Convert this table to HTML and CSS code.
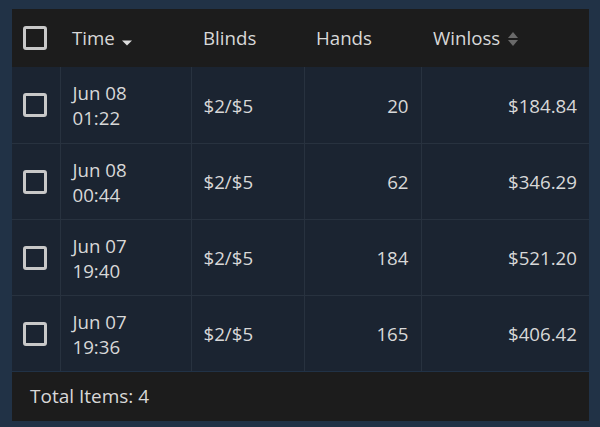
FILE: index.html
```html
<!DOCTYPE html>
<html>
<head>
<meta charset="utf-8">
<link rel="stylesheet" href="styles.css">
</head>
<body>
<div class="wrap">
  <table class="grid">
    <colgroup>
      <col class="c-check"><col class="c-time"><col class="c-blinds"><col class="c-hands"><col class="c-win">
    </colgroup>
    <thead>
      <tr>
        <th class="check"><span class="box"></span></th>
        <th>Time <svg class="caret" width="12" height="8" viewBox="0 0 12 8"><path d="M1 1.5h10L6 6.5z" fill="#dcdcdc"/></svg></th>
        <th>Blinds</th>
        <th>Hands</th>
        <th>Winloss <svg class="sort" width="12" height="16" viewBox="0 0 12 16"><path d="M6 1L11 7H1z" fill="#6a6a6a"/><path d="M1 9h10L6 15z" fill="#6a6a6a"/></svg></th>
      </tr>
    </thead>
    <tbody>
      <tr><td class="check"><span class="box"></span></td><td>Jun 08<br>01:22</td><td>$2/$5</td><td class="num">20</td><td class="num">$184.84</td></tr>
      <tr><td class="check"><span class="box"></span></td><td>Jun 08<br>00:44</td><td>$2/$5</td><td class="num">62</td><td class="num">$346.29</td></tr>
      <tr><td class="check"><span class="box"></span></td><td>Jun 07<br>19:40</td><td>$2/$5</td><td class="num">184</td><td class="num">$521.20</td></tr>
      <tr><td class="check"><span class="box"></span></td><td>Jun 07<br>19:36</td><td>$2/$5</td><td class="num">165</td><td class="num">$406.42</td></tr>
    </tbody>
  </table>
  <div class="footer">Total Items: 4</div>
</div>
</body>
</html>
```
FILE: styles.css
```css
html, body {
  margin: 0;
  padding: 0;
  background: #213246;
  width: 600px;
  height: 427px;
  overflow: hidden;
}
body {
  font-family: "Open Sans", "Noto Sans", sans-serif;
  color: #d8d8d8;
  font-size: 18.7px;
}
.wrap {
  margin: 9px 11px 0 12px;
  width: 577px;
}
.grid {
  width: 577px;
  border-collapse: collapse;
  table-layout: fixed;
}
.c-check { width: 48px; }
.c-time { width: 131px; }
.c-blinds { width: 113px; }
.c-hands { width: 117px; }
.c-win { width: 168px; }
th {
  background: #1c1c1c;
  height: 58px;
  padding: 0 12px;
  text-align: left;
  font-weight: 400;
  color: #d8d8d8;
  line-height: 24px;
  white-space: nowrap;
}
td {
  background: #1b2431;
  height: 75px;
  padding: 0 12px;
  line-height: 25px;
  border-left: 1px solid #28323f;
  border-top: 1px solid #28323f;
}
tbody tr:first-child td { border-top: none; height: 76px; }
td.check { border-left: none; }
th.check, td.check { padding: 0 0 0 11px; }
td.num { text-align: right; }
.box {
  display: block;
  width: 18px;
  height: 18px;
  border: 3px solid #c8c8c8;
  border-radius: 3px;
}
.caret { margin-left: 1px; vertical-align: -2px; }
.sort { margin-left: 2px; vertical-align: -2px; }
.footer {
  background: #1c1c1c;
  height: 49px;
  line-height: 49px;
  padding-left: 18px;
  margin-top: 1px;
  font-size: 19px;
}
```
